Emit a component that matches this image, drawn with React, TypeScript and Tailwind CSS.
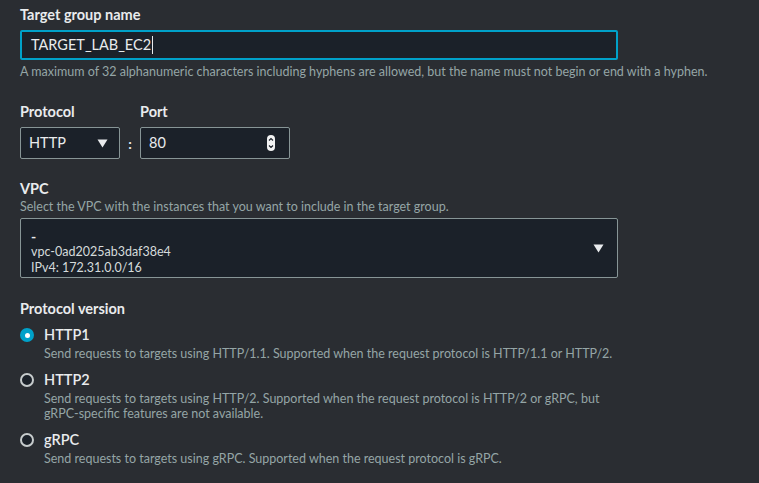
import { useState } from "react";

const font = { fontFamily: 'Lato, "Noto Sans", sans-serif' };

const Caret = ({ className = "" }: { className?: string }) => (
  <svg width="11" height="9" viewBox="0 0 11 9" className={className}>
    <path d="M0.5 0.5 H10.5 L5.5 8.5 Z" fill="#e9ebed" />
  </svg>
);

const Radio = ({ checked }: { checked: boolean }) =>
  checked ? (
    <span className="flex h-[14px] w-[14px] items-center justify-center rounded-full bg-[#00a1c9]">
      <span className="block h-[5px] w-[5px] rounded-full bg-white" />
    </span>
  ) : (
    <span className="block h-[14px] w-[14px] rounded-full border-2 border-[#c6cbcc] bg-[#1b2129]" />
  );

const versions = [
  {
    id: "HTTP1",
    desc: "Send requests to targets using HTTP/1.1. Supported when the request protocol is HTTP/1.1 or HTTP/2.",
  },
  {
    id: "HTTP2",
    desc: "Send requests to targets using HTTP/2. Supported when the request protocol is HTTP/2 or gRPC, but gRPC-specific features are not available.",
  },
  {
    id: "gRPC",
    desc: "Send requests to targets using gRPC. Supported when the request protocol is gRPC.",
  },
];

const App = () => {
  const [version, setVersion] = useState("HTTP1");

  return (
    <div className="min-h-screen w-full bg-[#2a2d32] px-5 pt-[5px] text-[#d5dbdb]" style={font}>
      {/* Target group name */}
      <div className="text-[14.5px] font-bold leading-[20px] text-[#e9ebed]">Target group name</div>
      <div className="mt-[5px] flex h-[30px] w-[598px] items-center rounded-[2px] border-2 border-[#00a1c9] bg-[#1b2129] px-[9px] text-[14.5px] text-[#e9ebed]">
        TARGET_LAB_EC2<span className="ml-[1px] h-[18px] w-px bg-[#e9ebed]" />
      </div>
      <div className="mt-[4px] text-[12.5px] leading-[16px] text-[#95a5a6]">
        A maximum of 32 alphanumeric characters including hyphens are allowed, but the name must not begin or end with a hyphen.
      </div>

      {/* Protocol / Port */}
      <div className="mt-[22px] flex items-end">
        <div className="flex flex-col">
          <div className="text-[14.5px] font-bold leading-[20px] text-[#e9ebed]">Protocol</div>
          <div className="mt-[5px] flex h-[32px] w-[100px] items-center justify-between rounded-[2px] border border-[#879596] bg-[#1b2129] pl-[8px] pr-[11px] text-[14.5px] text-[#e9ebed]">
            HTTP
            <Caret />
          </div>
        </div>
        <div className="flex h-[32px] w-[20px] items-center justify-center text-[14px] font-bold text-[#e9ebed]">:</div>
        <div className="flex flex-col">
          <div className="text-[14.5px] font-bold leading-[20px] text-[#e9ebed]">Port</div>
          <div className="mt-[5px] flex h-[32px] w-[150px] items-center justify-between rounded-[2px] border border-[#879596] bg-[#1b2129] pl-[8px] pr-[14px] text-[14.5px] text-[#e9ebed]">
            80
            <svg width="8" height="16" viewBox="0 0 8 16">
              <rect x="0" y="0" width="8" height="16" rx="4" fill="#f2f3f3" />
              <path d="M2 5.5 L4 3.5 L6 5.5" stroke="#1b2129" strokeWidth="1.2" fill="none" />
              <path d="M2 10.5 L4 12.5 L6 10.5" stroke="#1b2129" strokeWidth="1.2" fill="none" />
            </svg>
          </div>
        </div>
      </div>

      {/* VPC */}
      <div className="mt-[20px] text-[14.5px] font-bold leading-[20px] text-[#e9ebed]">VPC</div>
      <div className="text-[12.5px] leading-[16px] text-[#95a5a6]">
        Select the VPC with the instances that you want to include in the target group.
      </div>
      <div className="mt-[3px] flex h-[60px] w-[598px] items-center justify-between rounded-[2px] border border-[#879596] bg-[#1b2129] pl-[10px] pr-[13px]">
        <div className="flex flex-col self-start pt-[11px]">
          <span className="text-[14px] font-bold leading-[14px] text-[#e9ebed]">-</span>
          <span className="text-[12.5px] leading-[16px] text-[#d5dbdb]">vpc-0ad2025ab3daf38e4</span>
          <span className="text-[12.5px] leading-[15px] text-[#d5dbdb]">IPv4: 172.31.0.0/16</span>
        </div>
        <Caret />
      </div>

      {/* Protocol version */}
      <div className="mt-[21px] text-[14.5px] font-bold leading-[20px] text-[#e9ebed]">Protocol version</div>
      <div className="mt-[5px] flex flex-col gap-[8px]">
        {versions.map((v) => (
          <label key={v.id} className="flex cursor-pointer items-start" onClick={() => setVersion(v.id)}>
            <span className="mt-[4px] block w-[24px] flex-none">
              <Radio checked={version === v.id} />
            </span>
            <span className="flex flex-col">
              <span className="text-[14.5px] font-semibold leading-[22px] text-[#e9ebed]">{v.id}</span>
              <span className="max-w-[575px] text-[12.5px] leading-[15px] text-[#95a5a6]">{v.desc}</span>
            </span>
          </label>
        ))}
      </div>
    </div>
  );
};

export default App;
